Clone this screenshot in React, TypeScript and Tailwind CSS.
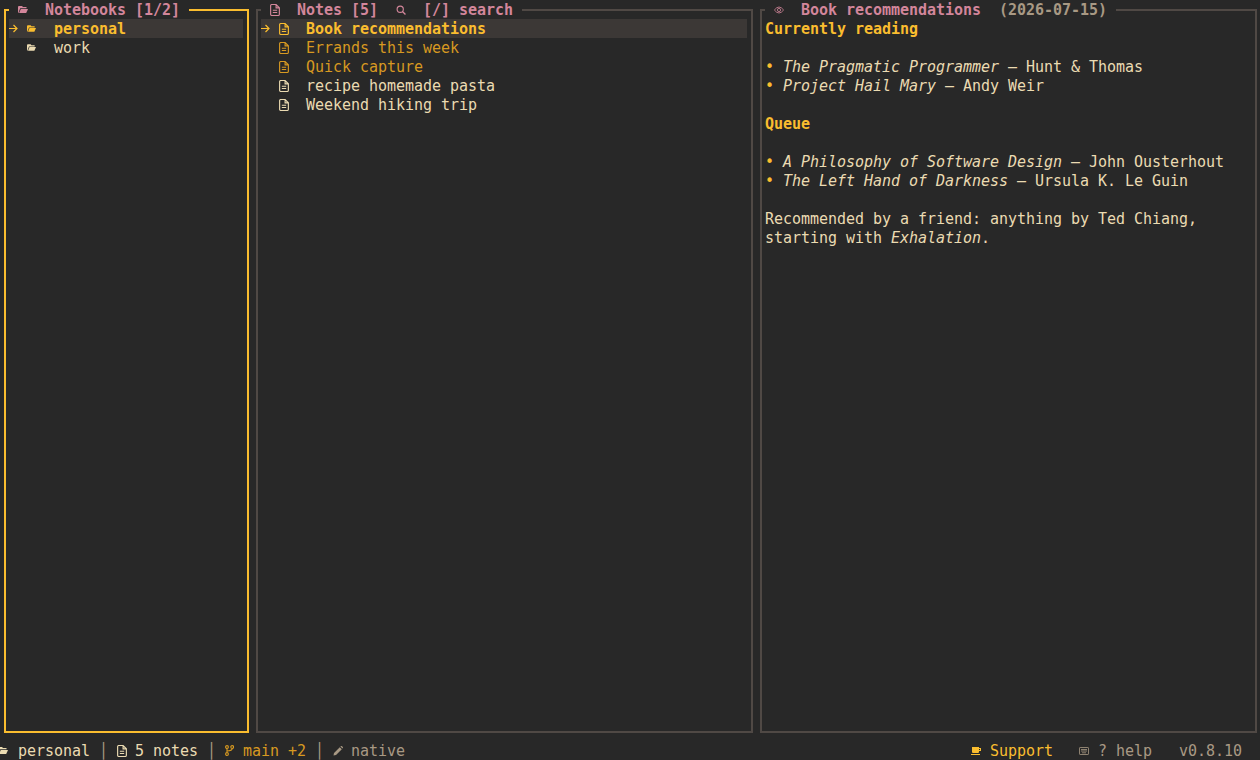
import React from "react";

const Folder = ({ className = "" }: { className?: string }) => (
  <svg viewBox="0 0 10 7" className={`w-[10px] h-[7px] ${className}`} fill="currentColor">
    <path d="M0 1 Q0 0 1 0 H4 L5 1 H8.5 V2.3 H2.2 L0.4 7 H0 Z" />
    <path d="M2.8 2.9 H10 L8.2 7 H1.1 Z" />
  </svg>
);
const FileI = ({ className = "" }: { className?: string }) => (
  <svg viewBox="0 0 9 11" className={`shrink-0 w-[10px] h-[12px] ${className}`} fill="none" stroke="currentColor" strokeWidth="1.05">
    <path d="M1.5 .5 H5.5 L8.5 3.5 V9.5 Q8.5 10.5 7.5 10.5 H1.5 Q.5 10.5 .5 9.5 V1.5 Q.5 .5 1.5 .5 Z M5.5 .5 V3.5 H8.5 M2.5 5.7 H6.5 M2.5 7.8 H6.5" />
  </svg>
);
const Arrow = () => (
  <svg viewBox="0 0 9 9" className="w-[9px] h-[9px]" fill="none" stroke="currentColor" strokeWidth="1.2">
    <path d="M0 4.5 H8 M4.5 1 L8 4.5 L4.5 8" />
  </svg>
);
const Search = () => (
  <svg viewBox="0 0 9 9" className="shrink-0 w-[10px] h-[10px]" fill="none" stroke="currentColor" strokeWidth="1">
    <circle cx="3.8" cy="3.8" r="2.8" />
    <path d="M5.8 5.8 L8.5 8.5" strokeWidth="1.2" />
  </svg>
);
const Eye = () => (
  <svg viewBox="0 0 10 8" className="w-[10px] h-[8px]" fill="none" stroke="currentColor" strokeWidth=".8">
    <path d="M.4 4 Q5 -2 9.6 4 Q5 10 .4 4 Z" />
    <circle cx="5" cy="4" r="1.6" />
  </svg>
);
const Branch = () => (
  <svg viewBox="0 0 9 11" className="w-[9px] h-[11px]" fill="none" stroke="currentColor" strokeWidth="1.1">
    <circle cx="2" cy="2" r="1.4" />
    <circle cx="7.2" cy="2" r="1.4" />
    <circle cx="2" cy="9" r="1.4" />
    <path d="M2 3.4 V7.6 M7.2 3.4 Q7.2 5.6 2 6" />
  </svg>
);
const Pencil = () => (
  <svg viewBox="0 0 10 10" className="w-[10px] h-[10px]" fill="currentColor">
    <path d="M0.5 9.5 L1 7 L6.8 1.2 L8.8 3.2 L3 9 Z M7.4 .6 L8 0 Q8.5 -.2 9 .2 L9.8 1 Q10.2 1.5 9.8 2 L9.4 2.6 Z" />
  </svg>
);
const Coffee = () => (
  <svg viewBox="0 0 10 8" className="w-[10px] h-[8px]" fill="currentColor">
    <path d="M1 0 H8 V1 H10 V4 H8 V5 Q8 6 7 6 H2 Q1 6 1 5 Z M8 2 V3 H9 V2 Z M0 7 H9 V8 H0 Z" fillRule="evenodd" />
  </svg>
);
const Keyboard = () => (
  <svg viewBox="0 0 10 8" className="w-[10px] h-[8px]" fill="none" stroke="currentColor" strokeWidth=".8">
    <rect x=".5" y=".5" width="9" height="7" rx=".6" />
    <path d="M2 2.5 H8 M2 4 H8 M3 5.8 H7" />
  </svg>
);

const Cell = ({ children, n = 1 }: { children?: React.ReactNode; n?: number }) => (
  <span className="inline-flex items-center justify-center h-[19px] align-top" style={{ width: n * 9 }}>
    {children}
  </span>
);

const Panel = ({
  title,
  active,
  className,
  children,
}: {
  title: React.ReactNode;
  active?: boolean;
  className: string;
  children?: React.ReactNode;
}) => (
  <section
    className={`relative h-[724px] pt-[8px] pl-[3px] pr-[4px] border-2 ${className} ${
      active ? "border-[#fabd2f]" : "border-[#504945]"
    }`}
  >
    <div className="absolute left-[3px] top-[-11px] h-[19px] bg-[#282828] flex">{title}</div>
    {children}
  </section>
);

const Row = ({
  selected,
  icon,
  text,
  pad,
  className = "",
}: {
  selected?: boolean;
  icon: React.ReactNode;
  text: string;
  pad: number;
  className?: string;
}) => (
  <div className={`flex h-[19px] ${selected ? "bg-[#3c3836] font-bold text-[#fabd2f]" : ""} ${className}`}>
    <Cell>{selected && <Arrow />}</Cell>
    <Cell n={1} />
    <Cell>{icon}</Cell>
    <Cell n={pad} />
    <span>{text}</span>
  </div>
);

const Pink = ({ children }: { children: React.ReactNode }) => (
  <span className="text-[#d3869b] font-bold">{children}</span>
);

const Sep = () => <span className="text-[#a89984]">{" │ "}</span>;

const Line = ({ children, className = "" }: { children?: React.ReactNode; className?: string }) => (
  <div className={`h-[19px] ${className}`}>{children}</div>
);

const Dot = () => <span className="text-[#fabd2f]">{"• "}</span>;

export default function App() {
  return (
    <div
      className="w-[1260px] h-[760px] overflow-hidden flex flex-col bg-[#282828] text-[#ebdbb2] text-[15px] leading-[21px] whitespace-pre tracking-[-0.03px]"
      style={{ fontFamily: '"DejaVu Sans Mono", monospace' }}
    >
      <main className="flex gap-[7px] pl-[4px] pt-[9px]">
        <Panel
          active
          className="w-[245px]"
          title={
            <>
              <Cell />
              <Cell>
                <span className="text-[#d3869b]"><Folder /></span>
              </Cell>
              <Cell n={2} />
              <Pink>Notebooks [1/2]</Pink>
              <Cell />
            </>
          }
        >
          <Row selected pad={2} icon={<Folder />} text="personal" />
          <Row pad={2} icon={<Folder />} text="work" />
        </Panel>
        <Panel
          className="w-[497px]"
          title={
            <>
              <Cell />
              <Cell>
                <span className="text-[#d3869b]"><FileI /></span>
              </Cell>
              <Cell n={2} />
              <Pink>Notes [5]</Pink>
              <Cell n={2} />
              <Cell>
                <span className="text-[#d3869b]"><Search /></span>
              </Cell>
              <Cell n={2} />
              <Pink>[/] search</Pink>
              <Cell />
            </>
          }
        >
          <Row selected pad={2} icon={<FileI />} text="Book recommendations" />
          <Row pad={2} icon={<FileI />} text="Errands this week" className="text-[#d79921]" />
          <Row pad={2} icon={<FileI />} text="Quick capture" className="text-[#d79921]" />
          <Row pad={2} icon={<FileI />} text="recipe homemade pasta" />
          <Row pad={2} icon={<FileI />} text="Weekend hiking trip" />
        </Panel>
        <Panel
          className="w-[497px]"
          title={
            <>
              <Cell />
              <Cell>
                <span className="text-[#d3869b]"><Eye /></span>
              </Cell>
              <Cell n={2} />
              <Pink>Book recommendations</Pink>
              <Cell n={2} />
              <span className="text-[#a89984] font-bold">(2026-07-15)</span>
              <Cell />
            </>
          }
        >
          <article>
            <Line className="font-bold text-[#fabd2f]">Currently reading</Line>
            <Line />
            <Line><Dot /><em>The Pragmatic Programmer</em> — Hunt &amp; Thomas</Line>
            <Line><Dot /><em>Project Hail Mary</em> — Andy Weir</Line>
            <Line />
            <Line className="font-bold text-[#fabd2f]">Queue</Line>
            <Line />
            <Line><Dot /><em>A Philosophy of Software Design</em> — John Ousterhout</Line>
            <Line><Dot /><em>The Left Hand of Darkness</em> — Ursula K. Le Guin</Line>
            <Line />
            <Line>Recommended by a friend: anything by Ted Chiang,</Line>
            <Line>starting with <em>Exhalation</em>.</Line>
          </article>
        </Panel>
      </main>
      <footer className="mt-[8px] h-[19px] flex justify-between">
        <div className="flex">
          <Cell><Folder className="-ml-[3px]" /></Cell>
          <span> personal</span>
          <Sep />
          <Cell><FileI /></Cell>
          <span> 5 notes</span>
          <Sep />
          <Cell><span className="text-[#d79921]"><Branch /></span></Cell>
          <span className="text-[#d79921]"> main +2</span>
          <Sep />
          <Cell><span className="text-[#a89984]"><Pencil /></span></Cell>
          <span className="text-[#a89984]"> native</span>
        </div>
        <div className="flex pr-[18px]">
          <Cell><span className="text-[#fabd2f]"><Coffee /></span></Cell>
          <span className="text-[#fabd2f]"> Support</span>
          <Cell n={3} />
          <Cell><span className="text-[#a89984]"><Keyboard /></span></Cell>
          <span className="text-[#a89984]"> ? help</span>
          <Cell n={3} />
          <span className="text-[#a89984]">v0.8.10</span>
        </div>
      </footer>
    </div>
  );
}
